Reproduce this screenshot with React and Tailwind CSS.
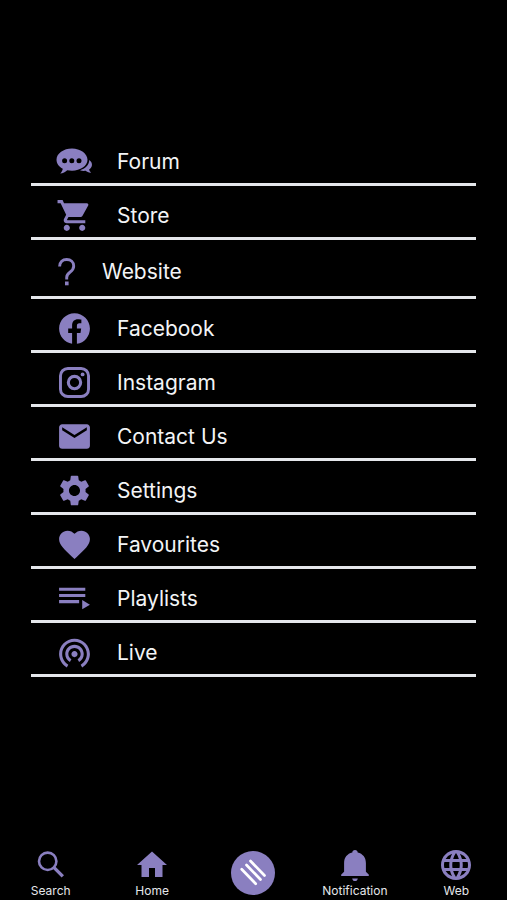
import React from "react";
import {
  MdEmail,
  MdFavorite,
  MdLanguage,
  MdSettings,
  MdShoppingCart,
  MdWifiTethering,
} from "react-icons/md";

const ForumIcon = ({ className }) => (
  <svg viewBox="0 0 37 37" fill="currentColor" className={className} aria-hidden="true">
    <path d="M33.300 17c2 1.400 3 3.400 2.600 5.600-.3 1.700-1.300 3-2.800 4 .2 1.200.9 2.200 2 3-2.100.2-4-.5-5.400-1.800-2 .3-4 .1-5.700-.6 5.200-1.300 8.900-4.900 9.300-10.200z" />
    <path
      fillRule="evenodd"
      d="M16 5.500C7.600 5.500.500 10.400.500 16.800c0 3.700 2.500 7 6.300 8.900-.3 1.900-1.200 3.400-2.600 4.700 2.800-.2 5.100-1.300 7-3.200 1.500.3 3.200.5 4.800.5 8.400 0 15.500-4.800 15.500-10.900S24.400 5.500 16 5.500zM8.600 15.200a2.500 2.500 0 1 0 0 5 2.500 2.500 0 0 0 0-5zm7.200 0a2.500 2.500 0 1 0 0 5 2.500 2.500 0 0 0 0-5zm7.200 0a2.500 2.500 0 1 0 0 5 2.500 2.500 0 0 0 0-5z"
    />
  </svg>
);

const QuestionIcon = ({ className }) => (
  <svg viewBox="0 0 22 37" fill="none" className={className} aria-hidden="true">
    <path
      d="M3.600 12.500C3.700 8 6.600 5.500 10.700 5.500s7 2.600 7 6.500c0 3-1.500 4.600-3.800 6.200-2.400 1.700-3.200 2.700-3.200 5.200v2"
      stroke="currentColor"
      strokeWidth="2.900"
    />
    <rect x="9" y="27.500" width="3.600" height="3.800" fill="currentColor" />
  </svg>
);

const FacebookIcon = ({ className }) => (
  <svg viewBox="0 0 24 24" fill="currentColor" className={className} aria-hidden="true">
    <path d="M12 2.040C6.500 2.040 2 6.530 2 12.060C2 17.060 5.660 21.210 10.440 21.960V14.960H7.900V12.060H10.440V9.850C10.440 7.340 11.930 5.960 14.220 5.960C15.310 5.960 16.450 6.150 16.450 6.150V8.620H15.190C13.950 8.620 13.560 9.390 13.560 10.180V12.060H16.340L15.890 14.960H13.560V21.960A10 10 0 0 0 22 12.060C22 6.530 17.500 2.040 12 2.040Z" />
  </svg>
);

const InstagramIcon = ({ className }) => (
  <svg viewBox="0 0 24 24" fill="none" className={className} aria-hidden="true">
    <rect x="2.900" y="2.900" width="18.200" height="18.200" rx="4.800" stroke="currentColor" strokeWidth="1.900" />
    <circle cx="12" cy="12" r="4" stroke="currentColor" strokeWidth="2" />
    <circle cx="17.250" cy="6.750" r="1.250" fill="currentColor" />
  </svg>
);

const PlaylistIcon = ({ className }) => (
  <svg viewBox="0 0 24 24" fill="currentColor" className={className} aria-hidden="true">
    <path d="M19 9H2v2h17V9zM19 5H2v2h17V5zM2 15h13v-2H2v2zM17 13v6l5-3-5-3z" />
  </svg>
);

const SearchIcon = ({ className }) => (
  <svg viewBox="0 0 36 36" fill="none" stroke="currentColor" className={className} aria-hidden="true">
    <circle cx="14.700" cy="14.300" r="8.700" strokeWidth="2.600" />
    <path d="M20.800 20.400l9 9" strokeWidth="3.400" />
  </svg>
);

const HomeIcon = ({ className }) => (
  <svg viewBox="0 0 24 24" fill="currentColor" className={className} aria-hidden="true">
    <path d="M10 20v-6h4v6h5v-8h3L12 3 2 12h3v8h5z" />
  </svg>
);

const BellIcon = ({ className }) => (
  <svg viewBox="0 0 36 36" fill="currentColor" className={className} aria-hidden="true">
    <path d="M18 3c1.600 0 2.700 1 2.700 2.600 5 1.200 8.200 5 8.200 10.300v8.800l2.800 2.800c.5.600.2 1.600-.7 1.600H5c-.9 0-1.200-1-.7-1.600l2.800-2.800v-8.800c0-5.300 3.200-9.100 8.200-10.300C15.300 4 16.400 3 18 3z" />
    <path d="M15.200 31.500h5.600c-.2 1.600-1.300 2.600-2.800 2.600s-2.600-1-2.800-2.600z" />
  </svg>
);

const MenuIcon = ({ className }) => (
  <svg
    viewBox="0 0 44 44"
    fill="none"
    stroke="currentColor"
    strokeWidth="2.700"
    strokeLinecap="round"
    className={className}
    aria-hidden="true"
  >
    <path d="M19.500 10l14 14.500M15.500 14l14 14.500M10.700 18.200l14 14.500" />
  </svg>
);

const links = [
  { id: "forum", label: "Forum", icon: ForumIcon },
  { id: "store", label: "Store", icon: MdShoppingCart },
  { id: "website", label: "Website", icon: QuestionIcon, narrow: true },
  { id: "facebook", label: "Facebook", icon: FacebookIcon },
  { id: "instagram", label: "Instagram", icon: InstagramIcon },
  { id: "contact", label: "Contact Us", icon: MdEmail },
  { id: "settings", label: "Settings", icon: MdSettings },
  { id: "favourites", label: "Favourites", icon: MdFavorite },
  { id: "playlists", label: "Playlists", icon: PlaylistIcon },
  { id: "live", label: "Live", icon: MdWifiTethering },
];

const Tab = ({ icon: Icon, label }) => (
  <button type="button" className="flex flex-col items-center">
    <Icon className="h-9 w-9 text-[#8a7fc0]" />
    <span className="text-xs leading-4 text-gray-200">{label}</span>
  </button>
);

const App = () => {
  return (
    <div className="flex min-h-screen flex-col bg-black font-['Inter',sans-serif] text-gray-100">
      {/* Menu links */}
      <main className="px-[31px] pt-[132px] pb-8">
        <ul>
          {links.map(({ id, label, icon: Icon, narrow }) => (
            <li key={id} className="border-b-3 border-gray-200">
              <a href={`#${id}`} className="flex items-center gap-6 pt-[11px] pb-[3px] pl-[25px]">
                <span className={narrow ? "flex h-[42px] items-center" : "flex h-[37px] items-center"}>
                  <Icon className={narrow ? "h-[37px] w-[22px] text-[#8a7fc0]" : "h-[37px] w-[37px] text-[#8a7fc0]"} />
                </span>
                <span className="text-[21px] leading-7">{label}</span>
              </a>
            </li>
          ))}
        </ul>
      </main>

      {/* Bottom tabs */}
      <nav className="mt-auto grid grid-cols-5 pb-px">
        <Tab icon={SearchIcon} label="Search" />
        <Tab icon={HomeIcon} label="Home" />
        <button type="button" aria-label="Menu" className="flex items-center justify-center">
          <span className="flex h-11 w-11 rounded-full bg-[#8a7fc0] text-white">
            <MenuIcon className="h-11 w-11" />
          </span>
        </button>
        <Tab icon={BellIcon} label="Notification" />
        <Tab icon={MdLanguage} label="Web" />
      </nav>
    </div>
  );
};

export default App;
